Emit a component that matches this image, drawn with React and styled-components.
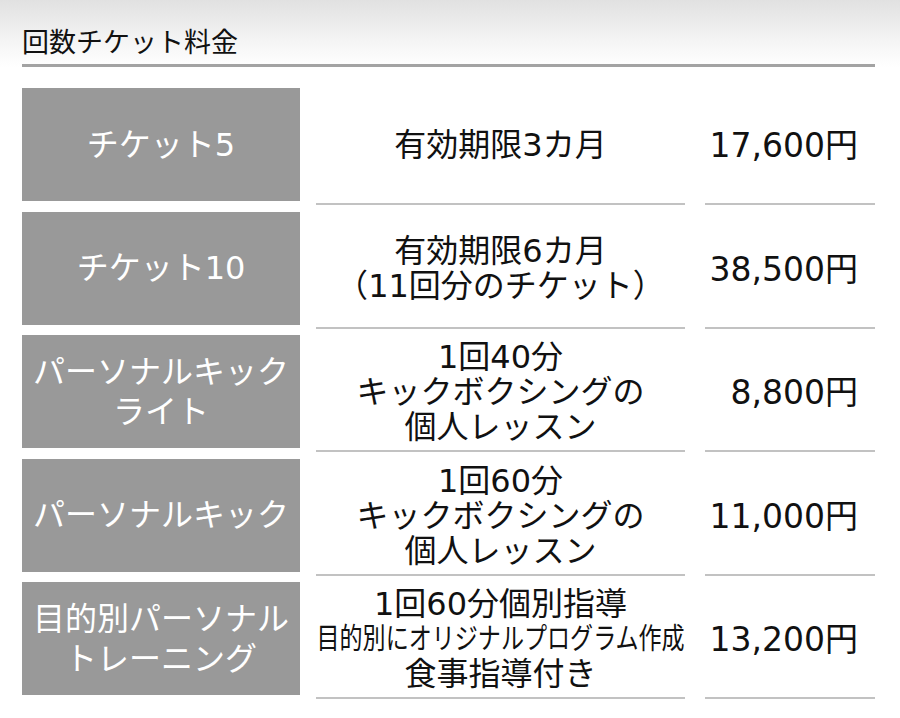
import React from "react";
import styled, { createGlobalStyle } from "styled-components";

const GlobalStyle = createGlobalStyle`
  body {
    margin: 0;
    background: #ffffff;
    font-family: "DejaVu Sans", "Noto Sans CJK JP", sans-serif;
    color: #111111;
  }
`;

const Page = styled.div`
  width: 900px;
  height: 718px;
  overflow: hidden;
  background: #ffffff;
`;

const Header = styled.div`
  padding: 0 25px 0 22px;
  background: linear-gradient(to bottom, #e1e1e1 0%, #f4f4f4 60%, #ffffff 100%);
`;

const Title = styled.h2`
  margin: 0;
  padding: 28px 0 6px;
  font-size: 27px;
  line-height: 30px;
  font-weight: 400;
  color: #111111;
  border-bottom: 3px solid #a3a3a3;
`;

const Table = styled.div`
  display: flex;
  flex-direction: column;
  gap: 6.5px;
  padding: 21px 25px 0 22px;
`;

const Row = styled.div`
  display: flex;
  height: 117px;
`;

const Label = styled.div`
  width: 278px;
  height: 113px;
  flex-shrink: 0;
  background: #999999;
  color: #ffffff;
  font-size: 32px;
  line-height: 40px;
  display: flex;
  flex-direction: column;
  align-items: center;
  justify-content: center;
  text-align: center;
  white-space: nowrap;
`;

const Cell = styled.div`
  box-sizing: border-box;
  height: 117px;
  flex-shrink: 0;
  border-bottom: 2px solid #c2c2c2;
  display: flex;
  flex-direction: column;
  justify-content: center;
  white-space: nowrap;
  font-size: 32px;
  line-height: 35px;
`;

const Detail = styled(Cell)`
  width: 369px;
  margin-left: 16px;
  align-items: center;
  text-align: center;
`;

const Price = styled(Cell)`
  width: 170px;
  margin-left: 20px;
  align-items: flex-end;
  padding-right: 17px;
  font-size: 33px;
`;

const Line = styled.span`
  display: block;
  transform: ${(p) => (p.$squeeze ? `scaleX(${p.$squeeze})` : "none")};
  font-size: ${(p) => (p.$squeeze ? "29px" : "inherit")};
`;

const Paren = styled.span`
  font-feature-settings: "halt";
`;

const rows = [
  { label: ["チケット5"], detail: ["有効期限3カ月"], price: "17,600円" },
  {
    label: ["チケット10"],
    detail: [
      "有効期限6カ月",
      <>
        <Paren>（</Paren>11回分のチケット<Paren>）</Paren>
      </>,
    ],
    price: "38,500円",
  },
  {
    label: ["パーソナルキック", "ライト"],
    detail: ["1回40分", "キックボクシングの", "個人レッスン"],
    price: "8,800円",
  },
  {
    label: ["パーソナルキック"],
    detail: ["1回60分", "キックボクシングの", "個人レッスン"],
    price: "11,000円",
  },
  {
    label: ["目的別パーソナル", "トレーニング"],
    detail: ["1回60分個別指導", "目的別にオリジナルプログラム作成", "食事指導付き"],
    squeeze: 1,
    price: "13,200円",
  },
];

function App() {
  return (
    <Page>
      <GlobalStyle />
      <Header>
        <Title>回数チケット料金</Title>
      </Header>
      <Table>
        {rows.map((row, i) => (
          <Row key={i}>
            <Label>
              {row.label.map((t, j) => (
                <Line key={j}>{t}</Line>
              ))}
            </Label>
            <Detail>
              {row.detail.map((t, j) => (
                <Line key={j} $squeeze={row.squeeze === j ? 0.795 : null}>
                  {t}
                </Line>
              ))}
            </Detail>
            <Price>{row.price}</Price>
          </Row>
        ))}
      </Table>
    </Page>
  );
}

export default App;
